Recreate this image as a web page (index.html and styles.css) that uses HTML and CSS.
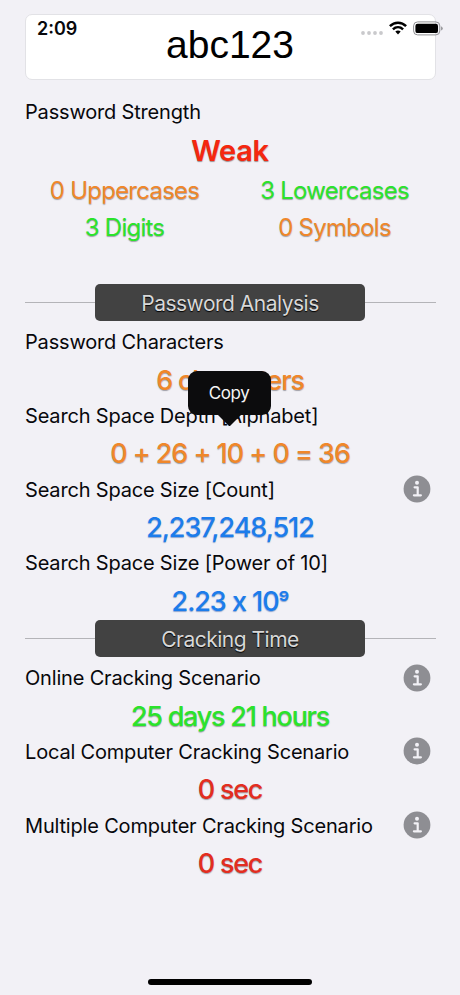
FILE: index.html
```html
<!DOCTYPE html>
<html lang="en">
<head>
<meta charset="utf-8">
<meta name="viewport" content="width=device-width, initial-scale=1">
<title>Password Strength</title>
<link rel="stylesheet" href="styles.css">
</head>
<body>
<svg class="defs" width="0" height="0" aria-hidden="true">
  <symbol id="info" viewBox="0 0 28 28">
    <circle cx="14" cy="14" r="13.4" fill="#8e8e93"/>
    <circle cx="14" cy="7.7" r="2" fill="#f2f1f6"/>
    <path d="M11.6 12.3H14.7V20.3M10.9 20.3H17.9" fill="none" stroke="#f2f1f6" stroke-width="2.2" stroke-linecap="round" stroke-linejoin="round"/>
  </symbol>
</svg>
<div class="status">
  <span class="time">2:09</span>
  <div class="indicators">
    <svg class="dots" viewBox="0 0 22 4" width="22" height="4"><g fill="#c9c9cc"><circle cx="2" cy="2" r="1.9"/><circle cx="8" cy="2" r="1.9"/><circle cx="14" cy="2" r="1.9"/><circle cx="20" cy="2" r="1.9"/></g></svg>
    <svg class="wifi" viewBox="0 0 18 14" width="18" height="14"><g fill="none" stroke="#000" stroke-width="2.5"><path d="M.9 5.1C5.5 .5 12.5 .5 17.1 5.1"/><path d="M3.9 8.4C6.9 5.6 11.1 5.6 14.1 8.4"/></g><path d="M9 13.5 6.3 10.6C7.8 9.2 10.2 9.2 11.7 10.6Z"/></svg>
    <svg class="battery" viewBox="0 0 30 15" width="30" height="15"><rect x=".6" y=".9" width="26.2" height="13" rx="4" fill="none" stroke="#8f8f93"/><rect x="2.4" y="2.7" width="22.6" height="9.4" rx="2.2"/><path d="M28.1 5.2Q29.7 6 29.7 7.4T28.1 9.6Z" fill="#8f8f93"/></svg>
  </div>
</div>
<main>
  <div class="field">abc123</div>
  <section class="strength">
    <div class="label"><span>Password Strength</span></div>
    <div class="verdict">Weak</div>
    <div class="counts">
      <span class="orange">0 Uppercases</span><span class="green">3 Lowercases</span>
      <span class="green">3 Digits</span><span class="orange">0 Symbols</span>
    </div>
  </section>
  <h2><span>Password Analysis</span></h2>
  <section class="rows">
    <div class="label"><span>Password Characters</span></div>
    <div class="value orange">6 characters</div>
    <div class="label"><span>Search Space Depth [Alphabet]</span></div>
    <div class="value orange numeric">0 + 26 + 10 + 0 = 36<div class="tip">Copy</div></div>
    <div class="label"><span>Search Space Size [Count]</span><svg class="info"><use href="#info"/></svg></div>
    <div class="value blue numeric">2,237,248,512</div>
    <div class="label"><span>Search Space Size [Power of 10]</span></div>
    <div class="value blue numeric">2.23 x 10<span class="exponent">⁹</span></div>
  </section>
  <h2 class="second"><span>Cracking Time</span></h2>
  <section class="rows">
    <div class="label"><span>Online Cracking Scenario</span><svg class="info"><use href="#info"/></svg></div>
    <div class="value green">25 days 21 hours</div>
    <div class="label"><span>Local Computer Cracking Scenario</span><svg class="info"><use href="#info"/></svg></div>
    <div class="value red">0 sec</div>
    <div class="label"><span>Multiple Computer Cracking Scenario</span><svg class="info"><use href="#info"/></svg></div>
    <div class="value red">0 sec</div>
  </section>
</main>
<div class="home"></div>
</body>
</html>
```
FILE: styles.css
```css
* { box-sizing: border-box; }
body {
  margin: 0;
  height: 995px;
  position: relative;
  overflow: hidden;
  background: #f2f1f6;
  color: #08080c;
  font-family: Inter, "Liberation Sans", sans-serif;
}
.defs { position: absolute; }
.status {
  position: absolute;
  top: 18px;
  left: 37px;
  right: 17.5px;
  height: 20px;
  display: flex;
  justify-content: space-between;
  align-items: center;
}
.time { font-size: 18px; font-weight: 600; }
.indicators { display: flex; align-items: center; }
.dots { margin: 9px 6px 0 0; }
.wifi { margin-right: 6px; }
main { padding: 14px 24.5px 0 24.5px; }
.field {
  height: 66px;
  padding-top: 2px;
  border: 1px solid #e2e2e6;
  border-radius: 7px;
  background: #fff;
  color: #000;
  font: 39px/56px "Liberation Sans", sans-serif;
  text-align: center;
}
.strength { padding-top: 14px; height: 204px; }
.label {
  height: 36.8px;
  display: flex;
  align-items: center;
  justify-content: space-between;
  padding: 0 5px 0 .5px;
  font-size: 20px;
  letter-spacing: -.18px;
  white-space: nowrap;
}
.info { width: 28px; height: 28px; margin-top: -1px; }
.verdict {
  height: 37px;
  margin-top: 2px;
  margin-bottom: 1px;
  line-height: 36px;
  font-size: 29px;
  font-weight: 600;
  letter-spacing: -.3px;
  text-align: center;
  color: #f5270f;
  text-shadow: 0 1px 1px rgba(90, 60, 60, .55);
}
.counts {
  display: grid;
  grid-template-columns: 200px 200px;
  column-gap: 10px;
  grid-auto-rows: 36.8px;
  line-height: 39px;
  font-size: 24px;
  letter-spacing: -.75px;
  text-align: center;
}
.value {
  position: relative;
  height: 36.8px;
  line-height: 39px;
  font-size: 27px;
  text-align: center;
  letter-spacing: -1.25px;
  font-weight: 450;
}
.numeric { letter-spacing: -1.05px; }
.exponent { font-size: 24px; font-weight: 500; }
.orange, .green, .red, .blue { text-shadow: 0 1px 1px rgba(80, 80, 90, .5); }
.orange { color: #f0872a; }
.green { color: #2be32b; }
.red { color: #e32d20; }
.blue { color: #1c7ceb; text-shadow: 0 1px 1px rgba(40, 90, 170, .5); }
h2 {
  height: 37px;
  margin: 0 0 3px;
  display: flex;
  align-items: center;
  font-size: 21px;
  font-weight: 400;
  letter-spacing: -.5px;
}
h2::before, h2::after { content: ""; flex: 1; height: 1px; background: #b4b4b8; }
h2 span {
  width: 270px;
  height: 37px;
  line-height: 39px;
  border-radius: 5px;
  background: #424242;
  color: #d8d8d8;
  text-align: center;
  text-shadow: 0 1px 1px #000;
}
.second { margin-top: 1.6px; }
.tip {
  position: absolute;
  left: 163px;
  top: -63px;
  width: 83px;
  height: 44px;
  border-radius: 9px;
  background: #0c0c0d;
  color: #f5f5f5;
  font-size: 17px;
  font-weight: 400;
  line-height: 45px;
  letter-spacing: -.4px;
  text-shadow: none;
}
.tip::after {
  content: "";
  position: absolute;
  left: 30px;
  top: 43px;
  width: 24px;
  height: 12px;
  background: #0c0c0d;
  clip-path: polygon(0 0, 100% 0, 50% 100%);
}
.home {
  position: absolute;
  left: 148px;
  top: 979px;
  width: 164px;
  height: 6px;
  border-radius: 3px;
  background: #000;
}
```
